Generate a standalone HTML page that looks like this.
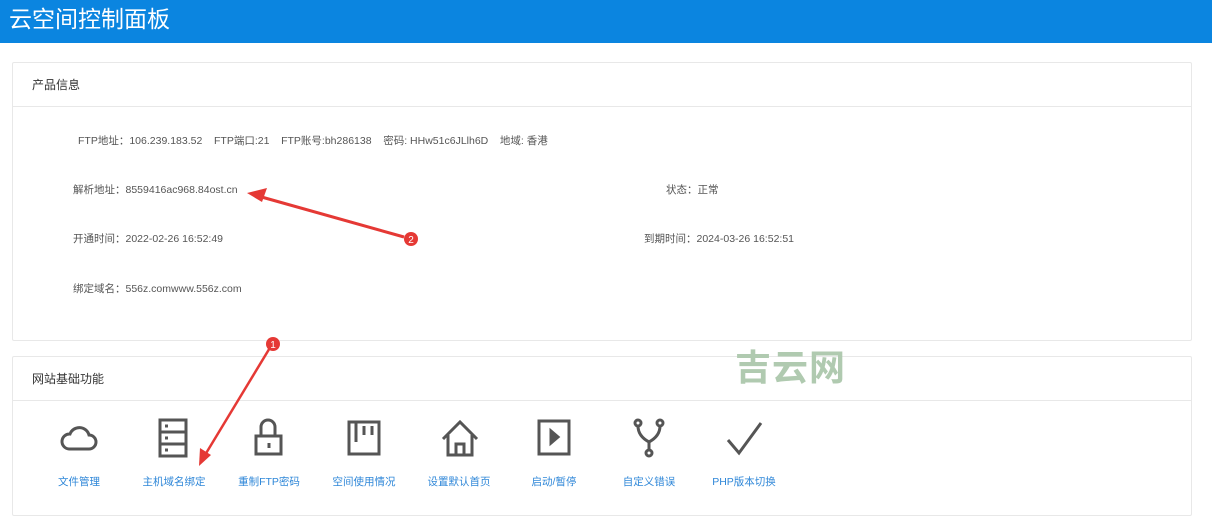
<!DOCTYPE html><html><head><meta charset="utf-8"><style>
*{margin:0;padding:0;box-sizing:border-box}
body{width:1212px;height:500px;overflow:hidden;background:#fff;font-family:"Liberation Sans","Noto Sans CJK SC",sans-serif;position:relative}
.hd{position:absolute;left:0;top:0;width:1212px;height:43px;background:#0b85e0;color:#fff;font-size:23px;line-height:38px;padding-left:9px}
.p{position:absolute;left:12px;width:1180px;border:1px solid #e8e8e8;border-radius:2px}
.ph{height:44px;border-bottom:1px solid #e8e8e8;font-size:12px;color:#333;line-height:44px;padding-left:19px}
.t{position:absolute;font-size:10.5px;color:#555;white-space:nowrap}
.lb{position:absolute;font-size:10.5px;color:#2f87d8;white-space:nowrap;transform:translateX(-50%);top:474px}
svg.i{position:absolute;top:418px}
</style></head><body>
<div class="hd">云空间控制面板</div>
<div class="p" style="top:62px;height:279px"><div class="ph">产品信息</div></div>
<div class="p" style="top:356px;height:160px"><div class="ph">网站基础功能</div></div>
<div class="t" style="left:78px;top:133px">FTP地址：106.239.183.52 &nbsp;&nbsp;&nbsp;FTP端口:21 &nbsp;&nbsp;&nbsp;FTP账号:bh286138 &nbsp;&nbsp;&nbsp;密码: HHw51c6JLlh6D &nbsp;&nbsp;&nbsp;地域: 香港</div>
<div class="t" style="left:73px;top:182px">解析地址：8559416ac968.84ost.cn</div>
<div class="t" style="left:73px;top:231px">开通时间：2022-02-26 16:52:49</div>
<div class="t" style="left:73px;top:281px">绑定域名：556z.comwww.556z.com</div>
<div class="t" style="left:666px;top:182px">状态：正常</div>
<div class="t" style="left:644px;top:231px">到期时间：2024-03-26 16:52:51</div>
<div style="position:absolute;left:735px;top:339px;font-size:36px;font-weight:bold;color:#b0cab0;letter-spacing:1px">吉云网</div>
<svg class="i" style="left:58px" width="42" height="40" viewBox="0 0 40 40" fill="none" stroke="#555" stroke-width="3"><path d="M10 31h20a7 7 0 0 0 0-14 10 10 0 0 0-19-1 7.5 7.5 0 0 0-1 15z"/></svg>
<svg class="i" style="left:158px" width="32" height="40" viewBox="0 0 32 40" fill="none" stroke="#555" stroke-width="3"><rect x="2" y="2" width="26" height="36"/><path d="M2 14h26M2 26h26M7 8h3M7 20h3M7 32h3"/></svg>
<svg class="i" style="left:253px" width="32" height="40" viewBox="0 0 32 40" fill="none" stroke="#555" stroke-width="3"><path d="M8 18V9a7 7 0 0 1 14 0v9"/><rect x="3" y="18" width="25" height="18"/><path d="M16 25v5"/></svg>
<svg class="i" style="left:347px" width="36" height="40" viewBox="0 0 36 40" fill="none" stroke="#555" stroke-width="3"><rect x="2" y="4" width="30" height="32"/><path d="M9 4v20M17 8v9M25 8v9"/></svg>
<svg class="i" style="left:440px" width="40" height="40" viewBox="0 0 40 40" fill="none" stroke="#555" stroke-width="3"><path d="M3 21L20 4l17 17M8 17v20h24V17M16 37V26h8v11"/></svg>
<svg class="i" style="left:537px" width="36" height="40" viewBox="0 0 36 40" fill="none" stroke="#555" stroke-width="3"><rect x="2" y="3" width="30" height="33"/><path d="M14 13l7 6-7 6z" fill="#555"/></svg>
<svg class="i" style="left:632px" width="34" height="40" viewBox="0 0 34 40" fill="none" stroke="#555" stroke-width="3"><circle cx="6" cy="5" r="3"/><circle cx="28" cy="5" r="3"/><circle cx="17" cy="35" r="3"/><path d="M6 8q0 10 11 16 11-6 11-16M17 24v8"/></svg>
<svg class="i" style="left:726px" width="38" height="40" viewBox="0 0 38 40" fill="none" stroke="#555" stroke-width="3"><path d="M2 22l11 13L35 5"/></svg>
<div class="lb" style="left:79px">文件管理</div>
<div class="lb" style="left:174px">主机域名绑定</div>
<div class="lb" style="left:269px">重制FTP密码</div>
<div class="lb" style="left:364px">空间使用情况</div>
<div class="lb" style="left:459px">设置默认首页</div>
<div class="lb" style="left:554px">启动/暂停</div>
<div class="lb" style="left:649px">自定义错误</div>
<div class="lb" style="left:744px">PHP版本切换</div>
<svg style="position:absolute;left:0;top:0" width="1212" height="500">
<path d="M404 237L258 196" stroke="#e53935" stroke-width="3"/><path d="M247 193l20-5-5 14z" fill="#e53935"/>
<path d="M271 346L205 455" stroke="#e53935" stroke-width="2.5"/><path d="M199 466l1-18 11 7z" fill="#e53935"/>
<circle cx="411" cy="239" r="7" fill="#e53935"/><text x="411" y="243" fill="#fff" font-size="10" text-anchor="middle" font-family="Liberation Sans">2</text>
<circle cx="273" cy="344" r="7" fill="#e53935"/><text x="273" y="348" fill="#fff" font-size="10" text-anchor="middle" font-family="Liberation Sans">1</text>
</svg>
</body></html>
